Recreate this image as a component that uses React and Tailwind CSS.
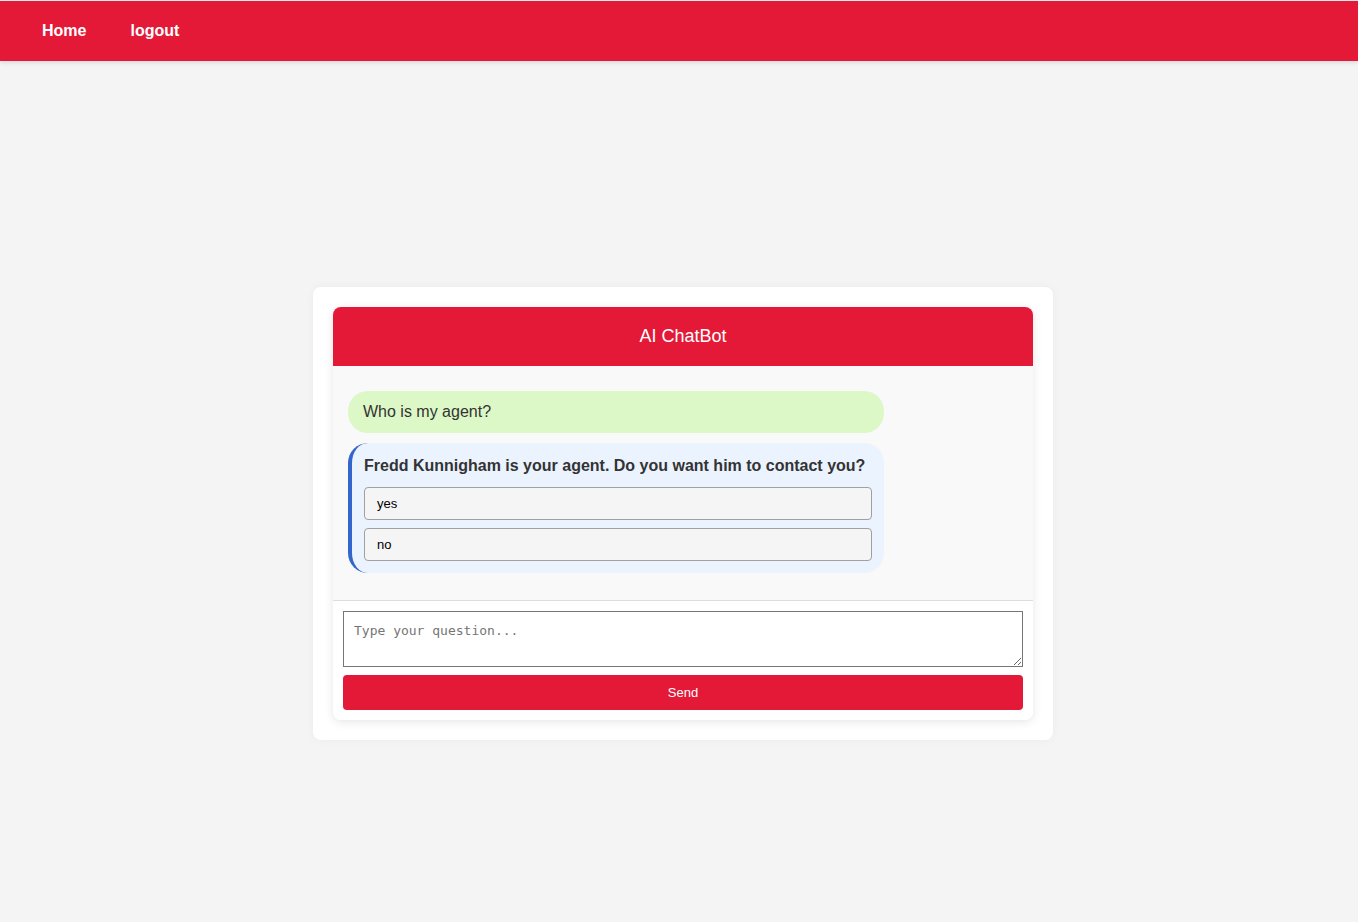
import React from 'react';

const messages = [
  { from: 'user', text: 'Who is my agent?' },
  {
    from: 'bot',
    text: 'Fredd Kunnigham is your agent. Do you want him to contact you?',
    options: ['yes', 'no'],
  },
];

const App = () => {
  return (
    <div className="min-h-screen bg-[#f4f4f4] font-['Liberation_Sans',Arial,sans-serif] text-[#333]">
      {/* Navbar */}
      <nav className="flex h-[61px] items-center gap-[44px] border-t border-[#e8e8e8] bg-[#e31937] px-[42px] shadow-[0_2px_4px_rgba(0,0,0,0.1)]">
        <a className="text-[16px] font-bold text-white">Home</a>
        <a className="text-[16px] font-bold text-white">logout</a>
      </nav>

      <main className="flex justify-center pl-[8px] pt-[226px]">
        <div className="w-[740px] rounded-lg bg-white p-5 shadow-[0_0_10px_rgba(0,0,0,0.04)]">
          <div className="overflow-hidden rounded-lg bg-white shadow-[0_2px_10px_rgba(0,0,0,0.1)]">
            {/* Header */}
            <div className="flex h-[59px] items-center justify-center bg-[#e31937] text-[18px] text-white">
              AI ChatBot
            </div>

            {/* Messages */}
            <div className="flex h-[234px] flex-col gap-[10px] bg-[#f9f9f9] px-[15px] pt-[25px]">
              {messages.map((m, i) =>
                m.from === 'user' ? (
                  <div
                    key={i}
                    className="w-[80%] rounded-[20px] bg-[#dcf8c6] px-[15px] py-[11px] text-[16px] leading-[20px]"
                  >
                    {m.text}
                  </div>
                ) : (
                  <div
                    key={i}
                    className="w-[80%] rounded-[20px] border-l-4 border-[#3366cc] bg-[#ebf3ff] pb-[12px] pl-[12px] pr-[12px] pt-[13px]"
                  >
                    <p className="text-[16px] font-bold leading-[20px]">{m.text}</p>
                    <div className="mt-[11px] flex flex-col gap-[8px]">
                      {m.options.map((o) => (
                        <button
                          key={o}
                          className="h-[33px] w-full rounded-[4px] border border-[#a0a0a0] bg-[#f5f5f5] px-[12px] pt-[1px] text-left text-[13px] text-black"
                        >
                          {o}
                        </button>
                      ))}
                    </div>
                  </div>
                )
              )}
            </div>

            {/* Input */}
            <div className="flex flex-col gap-[8px] border-t border-[#ddd] bg-white p-[10px]">
              <textarea
                placeholder="Type your question..."
                className="h-[56px] w-full resize-y border border-[#767676] px-[10px] pb-[10px] pt-[9px] font-['DejaVu_Sans_Mono',monospace] text-[13px] placeholder:text-[#757575]"
              />
              <button className="h-[35px] w-full rounded-[4px] bg-[#e31937] text-[13px] text-white">
                Send
              </button>
            </div>
          </div>
        </div>
      </main>
    </div>
  );
};

export default App;
